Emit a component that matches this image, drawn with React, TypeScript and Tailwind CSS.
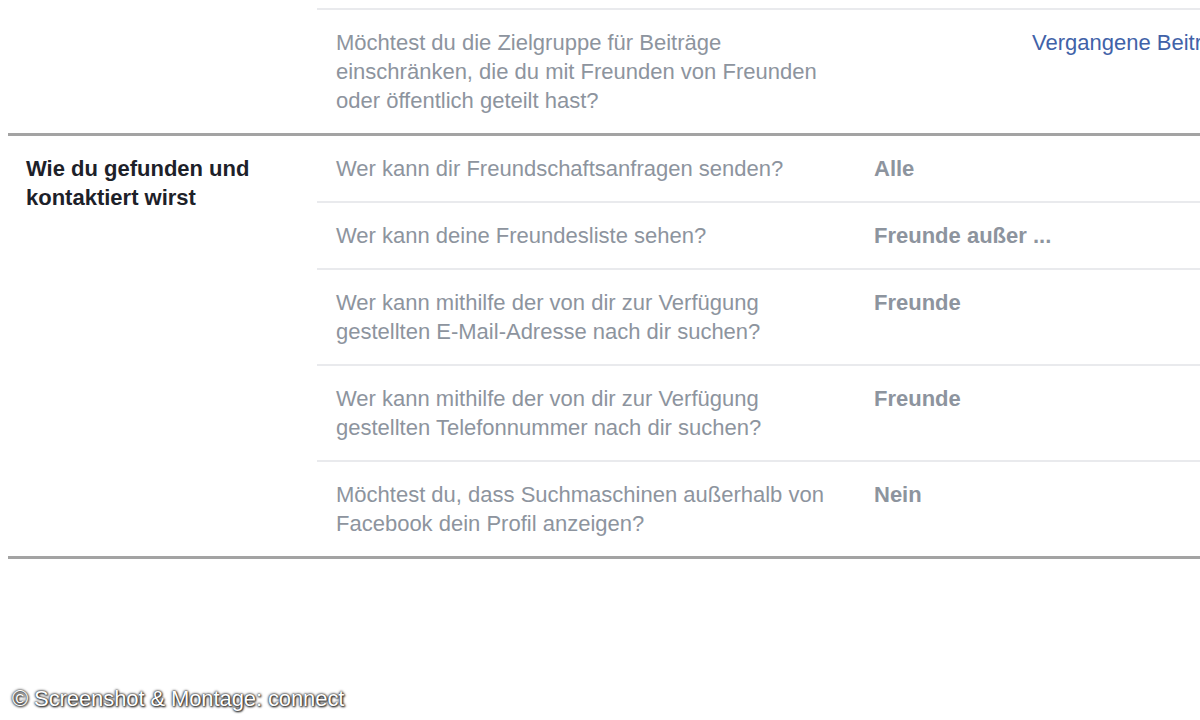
const rows = [
  { q: ["Wer kann dir Freundschaftsanfragen senden?"], v: "Alle" },
  { q: ["Wer kann deine Freundesliste sehen?"], v: "Freunde außer ..." },
  {
    q: ["Wer kann mithilfe der von dir zur Verfügung", "gestellten E-Mail-Adresse nach dir suchen?"],
    v: "Freunde",
  },
  {
    q: ["Wer kann mithilfe der von dir zur Verfügung", "gestellten Telefonnummer nach dir suchen?"],
    v: "Freunde",
  },
  {
    q: ["Möchtest du, dass Suchmaschinen außerhalb von", "Facebook dein Profil anzeigen?"],
    v: "Nein",
  },
];

export default function App() {
  return (
    <div className="relative h-[720px] w-[1200px] overflow-hidden bg-white pt-[8px] font-['Liberation_Sans',Arial,sans-serif] text-[22px] leading-[29px]">
      {/* previous section tail */}
      <section className="ml-[8px] flex border-b-[3px] border-[#a3a3a3]">
        <div className="w-[309px] shrink-0" />
        <div className="flex flex-1 border-t-2 border-[#e9eaed] py-[18px] pl-[19px]">
          <p className="w-[696px] shrink-0 whitespace-nowrap text-[#8d949e]">
            Möchtest du die Zielgruppe für Beiträge
            <br />
            einschränken, die du mit Freunden von Freunden
            <br />
            oder öffentlich geteilt hast?
          </p>
          <a className="whitespace-nowrap text-[#4162a8]">Vergangene Beiträge einschränken</a>
        </div>
      </section>

      {/* Wie du gefunden und kontaktiert wirst */}
      <section className="ml-[8px] flex border-b-[3px] border-[#a3a3a3]">
        <div className="w-[309px] shrink-0 pl-[18px] pt-[18px]">
          <h3 className="whitespace-nowrap font-bold text-[#1d2129]">
            Wie du gefunden und
            <br />
            kontaktiert wirst
          </h3>
        </div>
        <div className="flex-1">
          {rows.map((row, i) => (
            <div
              key={i}
              className={`flex py-[18px] pl-[19px] ${i > 0 ? "border-t-2 border-[#e9eaed]" : ""}`}
            >
              <p className="w-[538px] shrink-0 text-[#8d949e]">
                {row.q.map((line, j) => (
                  <span key={j} className="block whitespace-nowrap">
                    {line}
                  </span>
                ))}
              </p>
              <p className="whitespace-nowrap font-bold text-[#8d949e]">{row.v}</p>
            </div>
          ))}
        </div>
      </section>

      {/* watermark */}
      <div className="absolute left-[12px] top-[684px] text-[22px] tracking-[-0.1px] text-white [text-shadow:0_0_3px_#222,0_0_2px_#222,1px_1px_2px_#333]">
        © Screenshot &amp; Montage: connect
      </div>
    </div>
  );
}
